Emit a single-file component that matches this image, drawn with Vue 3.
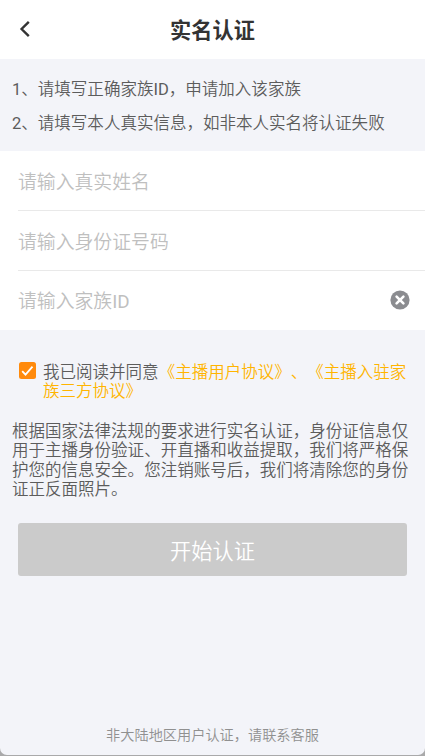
<template>
  <div class="page">
    <header class="bar">
      <button class="back" aria-label="返回">
        <svg width="12" height="18" viewBox="0 0 12 18"><path d="M9.8 1.8 2.6 9l7.2 7.2" /></svg>
      </button>
      <h1>实名认证</h1>
    </header>
    <section class="tips">
      <p><b>1</b>、请填写正确家族<b>ID</b>，申请加入该家族</p>
      <p><b>2</b>、请填写本人真实信息，如非本人实名将认证失败</p>
    </section>
    <section class="form">
      <div class="field"><span>请输入真实姓名</span></div>
      <div class="field"><span>请输入身份证号码</span></div>
      <div class="field">
        <span>请输入家族<b>ID</b></span>
        <svg class="clear" width="20" height="20" viewBox="0 0 20 20">
          <circle cx="10" cy="10" r="9.6" /><path d="m6.6 6.6 6.8 6.8m0-6.8-6.8 6.8" />
        </svg>
      </div>
    </section>
    <section class="agree">
      <svg class="check" width="17" height="17" viewBox="0 0 17 17">
        <rect width="17" height="17" rx="2.5" /><path d="m3.2 9.2 3.3 3.4 7-7.9" />
      </svg>
      <p>我已阅读并同意<a>《主播用户协议》、《主播入驻家<br>族三方协议》</a></p>
    </section>
    <p class="legal">根据国家法律法规的要求进行实名认证，身份证信息仅<br>用于主播身份验证、开直播和收益提取，我们将严格保<br>护您的信息安全。您注销账号后，我们将清除您的身份<br>证正反面照片。</p>
    <button class="submit">开始认证</button>
    <footer>非大陆地区用户认证，请联系客服</footer>
  </div>
</template>

<script setup>
</script>

<style>
body { background: #a9a9aa; }
</style>
<style scoped>
.page { height: 755px; border-radius: 0 0 7px 7px; display: flex; flex-direction: column; background: #f3f4f9; font-family: Roboto, "Noto Sans CJK SC", sans-serif; font-weight: 350; text-spacing-trim: space-all; color: #5c5c5c; overflow: hidden; }
p, h1 { margin: 0; }
b { font-weight: 400; }
button { border: 0; padding: 0; font-family: inherit; font-weight: inherit; }
.bar { height: 59px; background: #fff; display: grid; grid-template-columns: 50px 1fr 50px; align-items: center; text-align: center; flex: none; }
.back { background: none; height: 20px; padding-bottom: 2px; }
.back svg { display: block; margin: 0 auto; fill: none; stroke: #333; stroke-width: 2.4; }
h1 { font-size: 21.2px; font-weight: 700; color: #333; line-height: 30px; padding-top: 2px; }
.tips { height: 78px; padding: 14px 12px 0; font-size: 16.53px; line-height: 34px; white-space: nowrap; flex: none; }
.form { background: #fff; padding-left: 18px; flex: none; }
.field { height: 59px; border-bottom: 1px solid #e9e9e9; display: flex; align-items: center; justify-content: space-between; padding-right: 15px; font-size: 18.85px; color: #bfbfbf; }
.field span { padding-bottom: 1px; }
.field:last-child { border: 0; }
.field:last-child span { padding-bottom: 2px; }
.clear { margin-bottom: 1px; }
.clear circle { fill: #8b8c90; }
.clear path { stroke: #fff; stroke-width: 2.6; stroke-linecap: round; }
.agree { display: flex; gap: 7px; padding: 32px 0 0 19px; font-size: 16.53px; line-height: 19.3px; white-space: nowrap; }
.agree p { padding-top: .6px; }
.check { flex: none; }
.check rect { fill: #ff8a0c; }
.check path { fill: none; stroke: #fff; stroke-width: 1.8; }
a { color: #ffb400; }
.legal { padding: 21px 12px 0; font-size: 16.53px; line-height: 19.3px; white-space: nowrap; }
.submit { height: 53px; margin: 24px 18px 0; border-radius: 3px; background: #cbcbcb; color: #fff; font-size: 21.2px; flex: none; padding-bottom: 1px; }
footer { margin-top: auto; padding-bottom: 10px; text-align: center; font-size: 14.2px; line-height: 20px; color: #909090; }
</style>
